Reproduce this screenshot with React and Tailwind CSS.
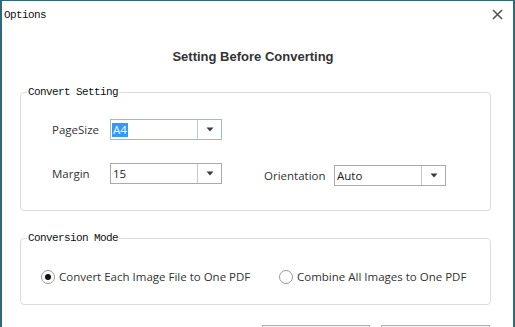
import React from "react";

const ui = { fontFamily: '"Open Sans", "Noto Sans", sans-serif' };
const mono = { fontFamily: '"Liberation Mono", "DejaVu Sans Mono", monospace' };

function Combo({ value, selected, focused, className = "" }) {
  return (
    <div
      className={`flex h-[21px] w-[112px] border ${focused ? "border-[#9fbcc4]" : "border-[#a9a9a9]"} bg-white ${className}`}
    >
      <div className="flex flex-1 items-center pl-[1px] text-[11.5px] text-[#222]" style={ui}>
        <span className={selected ? "bg-[#3399ff] px-[1px] text-white leading-[14px]" : "px-[1px] leading-[14px]"}>{value}</span>
      </div>
      <div className={`flex w-[24px] items-center justify-center border-l ${focused ? "border-[#b8cdd2]" : "border-[#c8c8c8]"}`}>
        <svg width="8" height="5" viewBox="0 0 8 5">
          <path d="M0.5 0.5 L7.5 0.5 L4 4.5 Z" fill="#3c3c3c" />
        </svg>
      </div>
    </div>
  );
}

function Radio({ checked, label }) {
  return (
    <div className="flex items-center gap-[4px]">
      <div className="flex h-[14px] w-[14px] items-center justify-center rounded-full border border-[#9a9a9a] bg-white">
        {checked && <div className="h-[6px] w-[6px] rounded-full bg-[#111]" />}
      </div>
      <span className="text-[11.5px] leading-[16px] text-[#333]" style={ui}>{label}</span>
    </div>
  );
}

export default function App() {
  return (
    <div className="h-[327px] w-[515px] overflow-hidden border-t border-l-2 border-r-2 border-[#2e6a7b] bg-white">
      <div className="flex h-[27px] items-center justify-between pl-[2px] pr-[10px]">
        <span className="text-[11px] leading-[12px] tracking-[-0.6px] text-[#111]" style={mono}>Options</span>
        <svg width="11" height="11" viewBox="0 0 11 11">
          <path d="M1 1 L10 10 M10 1 L1 10" stroke="#555" strokeWidth="1.6" />
        </svg>
      </div>
      <div
        className="mt-[21px] pr-[9px] text-center text-[13px] font-bold leading-[16px] text-[#333]"
        style={{ fontFamily: '"Liberation Sans", Arial, sans-serif' }}
      >
        Setting Before Converting
      </div>

      <div className="pl-[18px] pr-[22px]">
        <fieldset className="mt-[21px] rounded-[4px] border border-[#dcdcdc] pb-[24px]">
          <legend className="ml-[6px] px-[1px] text-[11px] leading-[12px] tracking-[-0.6px] text-[#111]" style={mono}>
            Convert Setting
          </legend>
          <div className="mt-[21px] flex items-center pl-[31px]">
            <span className="w-[58px] text-[11.5px] text-[#333]" style={ui}>PageSize</span>
            <Combo value="A4" selected focused />
          </div>
          <div className="mt-[23px] flex items-start pl-[31px]">
            <div className="flex items-center">
              <span className="w-[58px] text-[11.5px] text-[#333]" style={ui}>Margin</span>
              <Combo value="15" />
            </div>
            <div className="ml-[42px] mt-[2px] flex items-center">
              <span className="w-[70px] text-[11.5px] text-[#333]" style={ui}>Orientation</span>
              <Combo value="Auto" />
            </div>
          </div>
        </fieldset>

        <fieldset className="mt-[21px] rounded-[4px] border border-[#dcdcdc] pb-[19px]">
          <legend className="ml-[6px] px-[1px] text-[11px] leading-[12px] tracking-[-0.6px] text-[#111]" style={mono}>
            Conversion Mode
          </legend>
          <div className="mt-[25px] flex items-center pl-[20px]">
            <div className="w-[238px]">
              <Radio checked label="Convert Each Image File to One PDF" />
            </div>
            <Radio label="Combine All Images to One PDF" />
          </div>
        </fieldset>

        <div className="mt-[20px] flex justify-end gap-[11px] pr-[1px]">
          <div className="h-[24px] w-[108px] border border-[#adadad] bg-[#f5f5f5]" />
          <div className="h-[24px] w-[109px] border border-[#adadad] bg-[#f5f5f5]" />
        </div>
      </div>
    </div>
  );
}
